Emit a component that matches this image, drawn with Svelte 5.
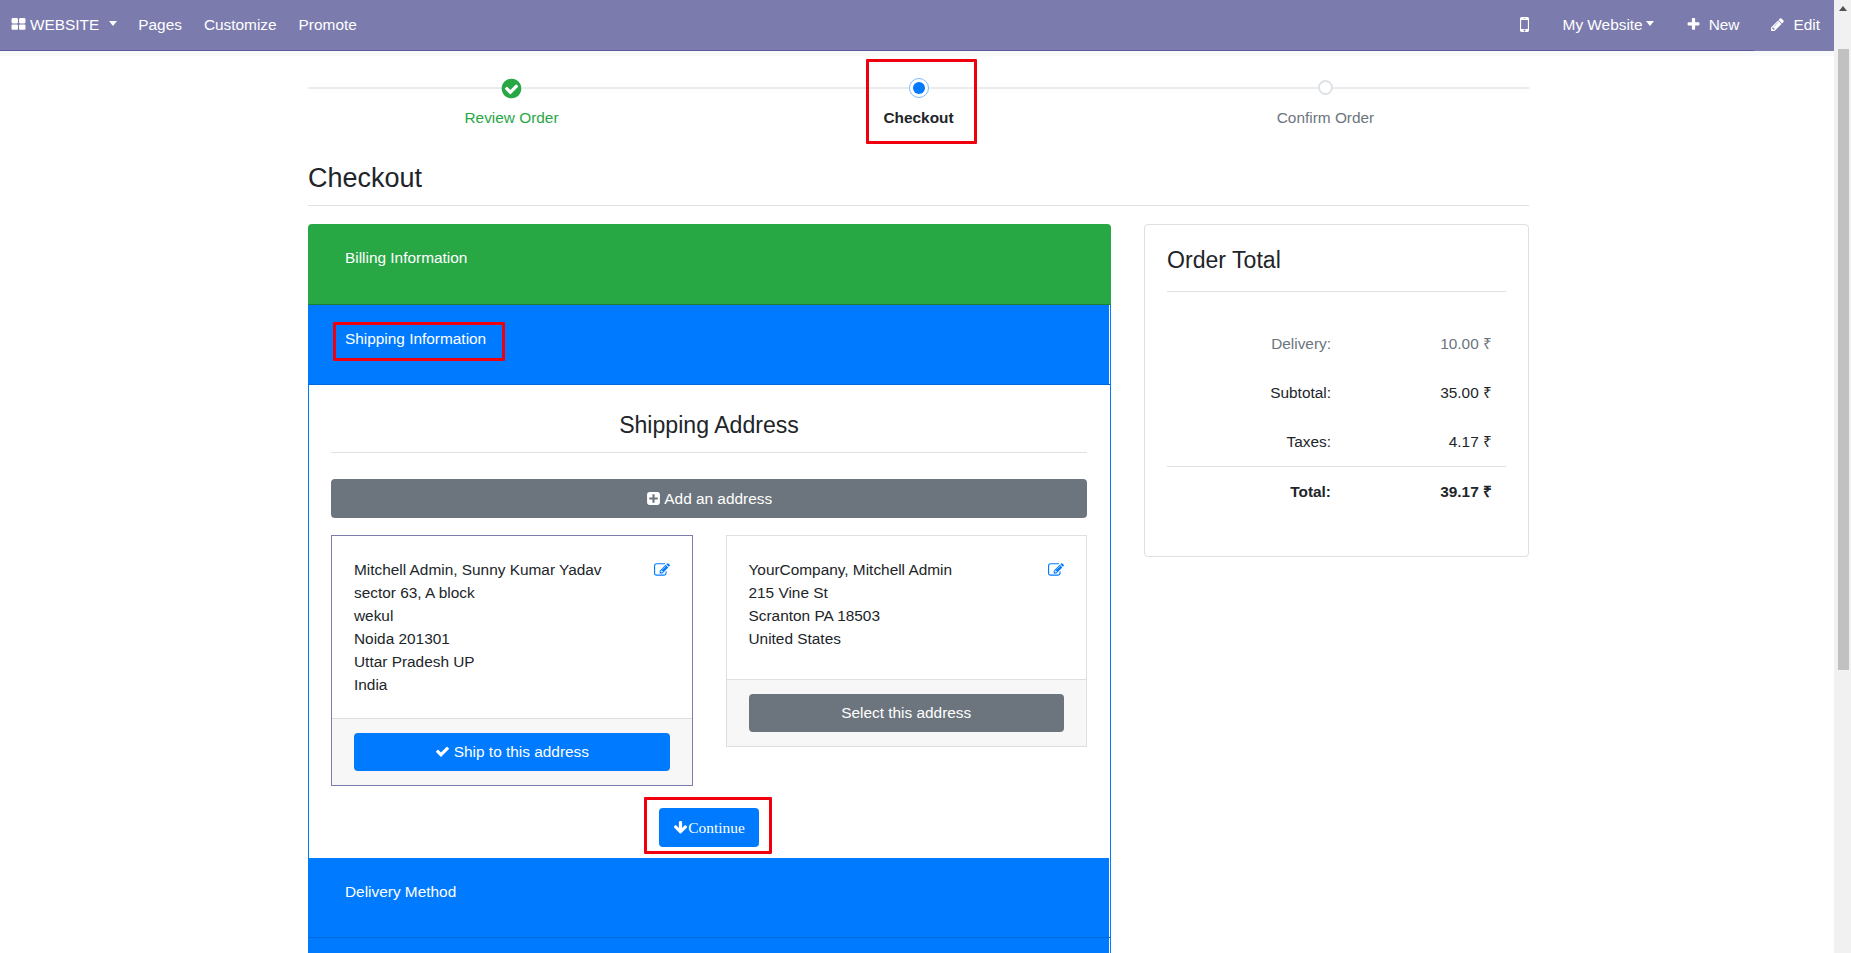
<script>
const icons = {
  grid: 'M832 1024v384q0 52-38 90t-90 38h-512q-52 0-90-38t-38-90v-384q0-52 38-90t90-38h512q52 0 90 38t38 90zm0-768v384q0 52-38 90t-90 38h-512q-52 0-90-38t-38-90v-384q0-52 38-90t90-38h512q52 0 90 38t38 90zm896 768v384q0 52-38 90t-90 38h-512q-52 0-90-38t-38-90v-384q0-52 38-90t90-38h512q52 0 90 38t38 90zm0-768v384q0 52-38 90t-90 38h-512q-52 0-90-38t-38-90v-384q0-52 38-90t90-38h512q52 0 90 38t38 90z',
  mobile: 'M976 1408q0-33-23.5-56.5t-56.5-23.5-56.5 23.5-23.5 56.5 23.5 56.5 56.5 23.5 56.5-23.5 23.5-56.5zm208-160v-704q0-13-9.5-22.5t-22.5-9.5h-512q-13 0-22.5 9.5t-9.5 22.5v704q0 13 9.5 22.5t22.5 9.5h512q13 0 22.5-9.5t9.5-22.5zm-192-848q0-16-16-16h-160q-16 0-16 16t16 16h160q16 0 16-16zm288-16v1024q0 52-38 90t-90 38h-512q-52 0-90-38t-38-90v-1024q0-52 38-90t90-38h512q52 0 90 38t38 90z',
  plus: 'M1600 736v192q0 40-28 68t-68 28h-416v416q0 40-28 68t-68 28h-192q-40 0-68-28t-28-68v-416h-416q-40 0-68-28t-28-68v-192q0-40 28-68t68-28h416v-416q0-40 28-68t68-28h192q40 0 68 28t28 68v416h416q40 0 68 28t28 68z',
  pencil: 'M491 1536l91-91-235-235-91 91v107h128v128h107zm523-928q0-22-22-22-10 0-17 7l-542 542q-7 7-7 17 0 22 22 22 10 0 17-7l542-542q7-7 7-17zm-54-192l416 416-832 832h-416v-416zm683 96q0 53-37 90l-166 166-416-416 166-165q36-38 90-38 53 0 91 38l235 234q37 39 37 91z',
  checkCircle: 'M1412 734q0-28-18-46l-91-90q-19-19-45-19t-45 19l-408 407-226-226q-19-19-45-19t-45 19l-91 90q-18 18-18 46 0 27 18 45l362 362q19 19 45 19 27 0 46-19l543-543q18-18 18-45zm252 162q0 209-103 385.5t-279.5 279.5-385.5 103-385.5-103-279.5-279.5-103-385.5 103-385.5 279.5-279.5 385.5-103 385.5 103 279.5 279.5 103 385.5z',
  plusSquare: 'M1408 960v-128q0-26-19-45t-45-19h-320v-320q0-26-19-45t-45-19h-128q-26 0-45 19t-19 45v320h-320q-26 0-45 19t-19 45v128q0 26 19 45t45 19h320v320q0 26 19 45t45 19h128q26 0 45-19t19-45v-320h320q26 0 45-19t19-45zm256-544v960q0 119-84.5 203.5t-203.5 84.5h-960q-119 0-203.5-84.5t-84.5-203.5v-960q0-119 84.5-203.5t203.5-84.5h960q119 0 203.5 84.5t84.5 203.5z',
  check: 'M1671 566q0 40-28 68l-724 724-136 136q-28 28-68 28t-68-28l-136-136-362-362q-28-28-28-68t28-68l136-136q28-28 68-28t68 28l294 295 656-657q28-28 68-28t68 28l136 136q28 28 28 68z',
  edit: 'M888 1184l116-116-152-152-116 116v56h96v96h56zm440-720q-16-16-33 1l-350 350q-17 17-1 33t33-1l350-350q17-17 1-33zm80 594v190q0 119-84.5 203.5t-203.5 84.5h-832q-119 0-203.5-84.5t-84.5-203.5v-832q0-119 84.5-203.5t203.5-84.5h832q63 0 117 25 15 7 18 23 3 17-9 29l-49 49q-14 14-32 8-23-6-45-6h-832q-66 0-113 47t-47 113v832q0 66 47 113t113 47h832q66 0 113-47t47-113v-126q0-13 9-22l64-64q15-15 35-7t20 29zm-96-738l288 288-672 672h-288v-288zm444 132l-92 92-288-288 92-92q28-28 68-28t68 28l152 152q28 28 28 68t-28 68z',
  arrowDown: 'M1675 832q0 53-37 90l-651 652q-39 37-91 37-53 0-90-37l-651-652q-38-36-38-90 0-53 38-91l74-75q39-37 91-37 53 0 90 37l294 294v-704q0-52 38-90t90-38h128q52 0 90 38t38 90v704l294-294q37-37 90-37 52 0 91 37l75 75q37 39 37 91z'
};

const addresses = [
  {
    lines: ['Mitchell Admin, Sunny Kumar Yadav', 'sector 63, A block', 'wekul', 'Noida 201301', 'Uttar Pradesh UP', 'India'],
    selected: true
  },
  {
    lines: ['YourCompany, Mitchell Admin', '215 Vine St', 'Scranton PA 18503', 'United States'],
    selected: false
  }
];

const totals = [
  { label: 'Delivery:', value: '10.00 ₹', muted: true },
  { label: 'Subtotal:', value: '35.00 ₹' },
  { label: 'Taxes:', value: '4.17 ₹' }
];
</script>

{#snippet icon(name, size)}
  <svg class="icon" width={size} height={size} viewBox="0 0 1792 1792" fill="currentColor"><path d={icons[name]} /></svg>
{/snippet}

<div class="shell">
  <div class="page">
    <nav class="topbar">
      <div class="nav-left">
        <a class="nav-item brand">{@render icon('grid', 15)}<span>WEBSITE</span><i class="caret wide"></i></a>
        <a class="nav-item">Pages</a>
        <a class="nav-item">Customize</a>
        <a class="nav-item">Promote</a>
      </div>
      <div class="nav-right">
        <a class="nav-item phone">{@render icon('mobile', 21)}</a>
        <a class="nav-item site">My Website<i class="caret"></i></a>
        <a class="nav-item new">{@render icon('plus', 15)}<span>New</span></a>
        <a class="nav-item edit">{@render icon('pencil', 15)}<span>Edit</span></a>
      </div>
    </nav>
    <div class="strip"></div>

    <main class="container">
      <div class="steps">
        <div class="step done">
          <span class="dot">{@render icon('checkCircle', 23)}</span>
          <span class="step-label">Review Order</span>
        </div>
        <div class="step current">
          <span class="dot"><b></b></span>
          <span class="step-label">Checkout</span>
        </div>
        <div class="step todo">
          <span class="dot"></span>
          <span class="step-label">Confirm Order</span>
        </div>
      </div>

      <h3 class="page-title">Checkout</h3>

      <div class="columns">
        <section class="accordion">
          <header class="panel-head green">Billing Information</header>
          <header class="panel-head">Shipping Information</header>
          <div class="panel-body">
            <h4 class="address-title">Shipping Address</h4>
            <button class="btn grey wide-btn">{@render icon('plusSquare', 15)} Add an address</button>
            <div class="address-grid">
              {#each addresses as address}
                <article class="address" class:selected={address.selected}>
                  <div class="address-text">
                    <div>
                      {#each address.lines as line}
                        <div>{line}</div>
                      {/each}
                    </div>
                    <span class="edit-link">{@render icon('edit', 16)}</span>
                  </div>
                  <div class="address-foot">
                    {#if address.selected}
                      <button class="btn blue">{@render icon('check', 15)} Ship to this address</button>
                    {:else}
                      <button class="btn grey">Select this address</button>
                    {/if}
                  </div>
                </article>
              {/each}
            </div>
            <div class="continue-row">
              <button class="btn blue continue">{@render icon('arrowDown', 15)}Continue</button>
            </div>
          </div>
          <header class="panel-head">Delivery Method</header>
          <header class="panel-head"></header>
        </section>

        <aside class="summary">
          <h4 class="summary-title">Order Total</h4>
          <div class="rows">
            {#each totals as row}
              <div class="row" class:muted={row.muted}>
                <span class="row-label">{row.label}</span>
                <span class="row-value">{row.value}</span>
              </div>
            {/each}
            <div class="row total">
              <span class="row-label">Total:</span>
              <span class="row-value">39.17 ₹</span>
            </div>
          </div>
        </aside>
      </div>

      <!-- red annotation boxes from the screenshot -->
      <div class="mark mark-step"></div>
      <div class="mark mark-shipping"></div>
      <div class="mark mark-continue"></div>
    </main>
  </div>

  <div class="scrollbar">
    <i class="arrow-up"></i>
    <div class="thumb"></div>
  </div>
</div>

<style>
  :global(body) {
    margin: 0;
    overflow: hidden;
    background: #fff;
  }

  .shell {
    display: flex;
    height: 953px;
    overflow: hidden;
    font-family: "Liberation Sans", Arial, sans-serif;
    font-size: 15.4px;
    line-height: 1.5;
    color: #212529;
  }

  .page {
    flex: 1;
    min-width: 0;
    overflow: hidden;
  }

  .topbar {
    display: flex;
    justify-content: space-between;
    height: 51px;
    background: #7c7bad;
    box-shadow: inset 0 -1px 0 #5d5b9c;
    color: #fff;
  }

  .nav-left, .nav-right {
    display: flex;
    align-items: flex-start;
  }

  .nav-item {
    display: flex;
    align-items: center;
    height: 49px;
    padding: 0 11px;
  }

  .brand {
    padding: 0 10px 0 11px;
    gap: 4px;
  }

  .phone {
    padding: 0 28px 0 0;
  }

  .site {
    padding: 0 21px 0 0;
  }

  .new {
    padding: 0 15px 0 11px;
    gap: 8px;
  }

  .edit {
    height: 51px;
    padding: 0 14px 2px 16px;
    box-sizing: border-box;
    gap: 8px;
    background: #7c7bad;
  }

  .caret {
    display: inline-block;
    width: 0;
    height: 0;
    margin-left: 3px;
    margin-top: -2px;
    border-left: 4.5px solid transparent;
    border-right: 4.5px solid transparent;
    border-top: 5px solid #fff;
  }

  .caret.wide {
    margin-left: 6px;
  }

  .icon {
    flex: none;
    vertical-align: -2px;
  }

  .strip {
    height: 5px;
    background: #f8f9fa;
  }

  .container {
    position: relative;
    width: 1221px;
    margin-left: 308px;
  }

  .steps {
    display: grid;
    grid-template-columns: repeat(3, 1fr);
    height: 90px;
    background: linear-gradient(#e9ecef, #e9ecef) 0 31px / 100% 2px no-repeat;
  }

  .step {
    display: flex;
    flex-direction: column;
    align-items: center;
  }

  .dot {
    display: flex;
    align-items: center;
    justify-content: center;
    width: 20px;
    height: 20px;
    margin-top: 22px;
    border-radius: 50%;
    box-sizing: border-box;
  }

  .done .dot {
    color: #28a745;
    background: #fff;
  }

  .current .dot {
    border: 1px solid #7fbaff;
    background: #fff;
  }

  .current .dot b {
    width: 12px;
    height: 12px;
    border-radius: 50%;
    background: #007bff;
  }

  .todo .dot {
    width: 15px;
    height: 15px;
    margin: 24px 0 3px;
    border: 2px solid #dee2e6;
    background: #fff;
  }

  .step-label {
    margin-top: 8px;
  }

  .done .step-label { color: #28a745; }
  .current .step-label { font-weight: 700; }
  .todo .step-label { color: #6c757d; }

  .page-title {
    margin: 0 0 18px;
    padding: 16px 0 11px;
    border-bottom: 1px solid #dee2e6;
    font-size: 27px;
    font-weight: 400;
    line-height: 1.2;
    height: 32px;
    box-sizing: content-box;
  }

  .columns {
    display: flex;
    align-items: flex-start;
    gap: 33px;
  }

  .accordion {
    width: 803px;
    flex: none;
  }

  .panel-head {
    box-sizing: border-box;
    height: 80px;
    padding: 22px 37px;
    background: #007bff;
    border-right: 1px solid #007bff;
    border-bottom: 1px solid #0069d9;
    box-shadow: inset -1px 0 0 #fff;
    color: #fff;
  }

  .panel-head.green {
    height: 81px;
    background: #28a745;
    border-right-color: #28a745;
    border-bottom-color: #1e7e34;
    border-radius: 4px 4px 0 0;
    box-shadow: none;
  }

  .panel-body {
    box-sizing: border-box;
    height: 473px;
    padding: 22px 23px 0 22px;
    border-left: 1px solid #007bff;
    border-right: 1px solid #007bff;
  }

  .address-title {
    margin: 0 0 26px;
    height: 46px;
    border-bottom: 1px solid #dee2e6;
    box-sizing: border-box;
    font-size: 23.1px;
    font-weight: 400;
    line-height: 1.2;
    text-align: center;
    padding-top: 5px;
  }

  .btn {
    display: block;
    box-sizing: border-box;
    width: 100%;
    height: 38px;
    padding: 0;
    border: 0;
    border-radius: 4px;
    color: #fff;
    font-family: inherit;
    font-size: 15.4px;
    text-align: center;
  }

  .btn.grey { background: #6c757d; }
  .btn.blue { background: #007bff; }

  .wide-btn {
    height: 39px;
    margin-bottom: 17px;
  }

  .address-grid {
    display: flex;
    align-items: flex-start;
    gap: 33px;
  }

  .address {
    display: flex;
    flex-direction: column;
    box-sizing: border-box;
    width: 362px;
    border: 1px solid #dfdfdf;
  }

  .address.selected {
    border-color: #7c7bad;
  }

  .address-text {
    display: flex;
    justify-content: space-between;
    box-sizing: border-box;
    height: 143px;
    padding: 22px 22px 0;
    line-height: 23.1px;
  }

  .selected .address-text {
    height: 182px;
  }

  .edit-link {
    color: #007bff;
    margin-top: 1px;
  }

  .address-foot {
    padding: 14px 22px;
    background: #f7f7f7;
    border-top: 1px solid #dfdfdf;
  }

  .continue-row {
    display: flex;
    justify-content: center;
    padding-top: 22px;
  }

  .btn.continue {
    width: 100px;
    height: 39px;
    font-family: "Liberation Serif", "Times New Roman", serif;
    font-size: 15.4px;
  }

  .summary {
    box-sizing: border-box;
    width: 385px;
    height: 333px;
    padding: 22px 22px 0;
    border: 1px solid #dfdfdf;
    border-radius: 4px;
  }

  .summary-title {
    margin: 0 0 27px;
    height: 45px;
    border-bottom: 1px solid #dee2e6;
    font-size: 23.1px;
    font-weight: 400;
    line-height: 1.2;
    box-sizing: border-box;
  }

  .row {
    display: flex;
    height: 49px;
    align-items: center;
  }

  .row.muted { color: #6c757d; }

  .row-label {
    width: 164px;
    text-align: right;
  }

  .row-value {
    width: 161px;
    text-align: right;
  }

  .total {
    border-top: 1px solid #dee2e6;
    font-weight: 700;
  }

  .mark {
    position: absolute;
    box-sizing: border-box;
    border: 3px solid #f0000f;
    border-radius: 1px;
  }

  .mark-step { left: 558px; top: 3px; width: 111px; height: 85px; }
  .mark-shipping { left: 25px; top: 266px; width: 172px; height: 39px; }
  .mark-continue { left: 336px; top: 741px; width: 128px; height: 57px; }

  .scrollbar {
    position: relative;
    flex: none;
    width: 17px;
    background: #f1f1f1;
  }

  .arrow-up {
    display: block;
    width: 0;
    margin: 6px auto 0;
    border-left: 4px solid transparent;
    border-right: 4px solid transparent;
    border-bottom: 5px solid #505050;
  }

  .thumb {
    position: absolute;
    left: 4px;
    right: 2px;
    top: 49px;
    height: 621px;
    background: #c1c1c1;
  }
</style>
